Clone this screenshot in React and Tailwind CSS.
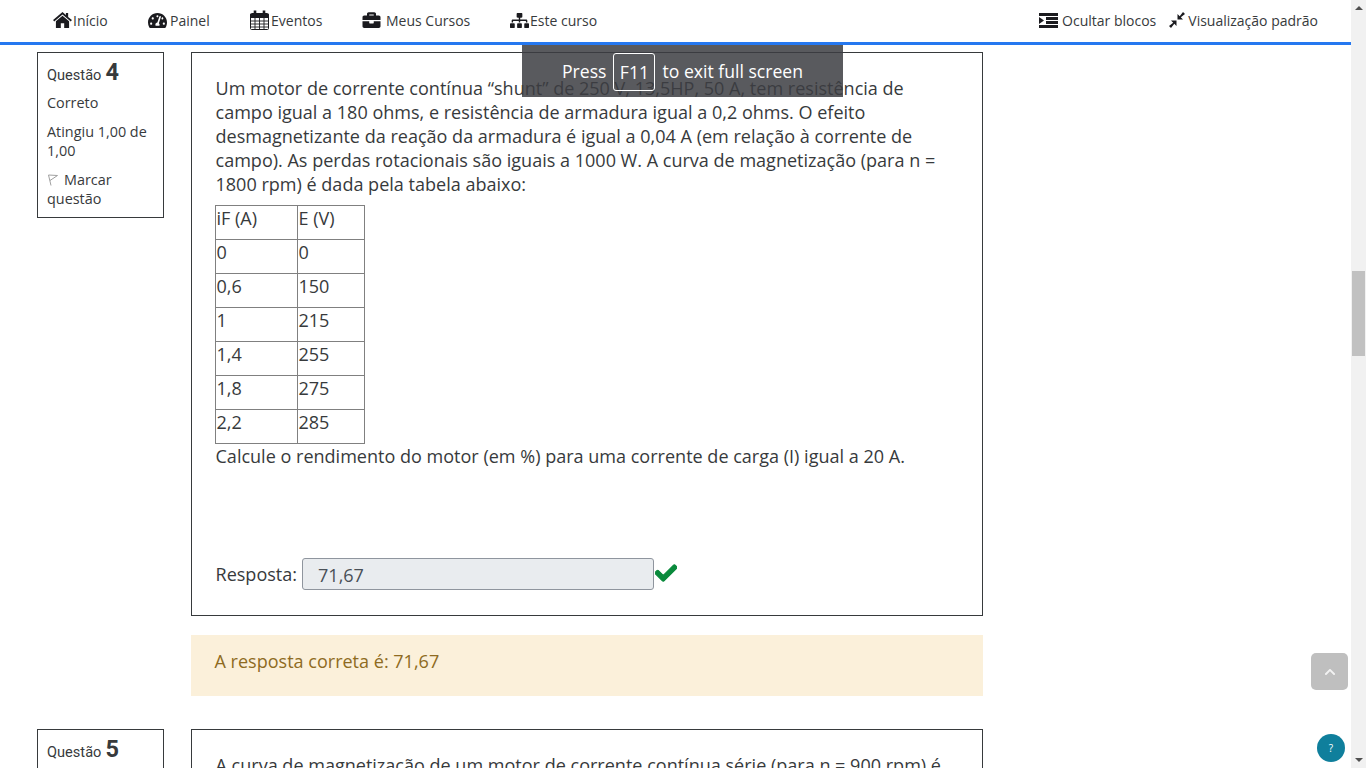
import { FaTachometerAlt, FaBriefcase, FaSitemap, FaCheck, FaChevronUp } from 'react-icons/fa';

const HomeIcon = () => (
    <svg viewBox="0 0 20 17" className="w-[19px] h-[16px]" fill="currentColor">
        <path d="M10 0 L13.6 3.1 V1 H16 V5.2 L20 8.6 L18.8 10 L10 2.6 L1.2 10 L0 8.6 Z" />
        <path d="M10 4 L17 9.8 V17 H11.8 V12 H8.2 V17 H3 V9.8 Z" />
    </svg>
);

const CalendarIcon = () => (
    <svg viewBox="0 0 19 20" className="w-[19px] h-[20px]" fill="none" stroke="currentColor">
        <rect x="0.5" y="3.5" width="18" height="16" rx="1" />
        <path d="M0.5 4.5 H18.5 V7.5 H0.5 Z" fill="currentColor" />
        <path d="M5 8 V19 M9.5 8 V19 M14 8 V19 M1 11 H18 M1 14 H18 M1 17 H18" strokeWidth="0.9" />
        <path d="M5 0.5 V5 M14 0.5 V5" strokeWidth="2.6" />
    </svg>
);

const IndentIcon = () => (
    <svg viewBox="0 0 19 15" className="w-[19px] h-[15px]" fill="currentColor">
        <rect x="0" y="0" width="19" height="3" />
        <rect x="7" y="4" width="12" height="3" />
        <rect x="7" y="8" width="12" height="3" />
        <rect x="0" y="12" width="19" height="3" />
        <path d="M0 4 L5 7.5 L0 11 Z" />
    </svg>
);

const CompressIcon = () => (
    <svg viewBox="0 0 16 16" className="w-[16px] h-[16px]" fill="currentColor">
        <path d="M7.5 8.5 V14 L5.3 11.8 L2 16 L0 14 L4.2 10.7 L2 8.5 Z" />
        <path d="M8.5 7.5 V2 L10.7 4.2 L14 0 L16 2 L11.8 5.3 L14 7.5 Z" />
    </svg>
);

const FlagIcon = () => (
    <svg viewBox="0 0 10 12" className="inline w-[10px] h-[12px] ml-[1px] mr-[6px] align-[-1px]" fill="none" stroke="#a0a0a0" strokeWidth="1">
        <path d="M0.5 1 L3 11.5" />
        <path d="M0.5 1 L9.5 1.5 L5 4.5 L2 6.5" />
    </svg>
);

const navLeft = [
    { icon: <HomeIcon />, label: 'Início', width: 'w-[95px]', gap: 'gap-[1px]' },
    { icon: <FaTachometerAlt className="w-[19px] h-[17px]" />, label: 'Painel', width: 'w-[102px]', gap: 'gap-[3px]' },
    { icon: <CalendarIcon />, label: 'Eventos', width: 'w-[111px]', gap: 'gap-[2px]' },
    { icon: <FaBriefcase className="w-[21px] h-[18px]" />, label: 'Meus Cursos', width: 'w-[149px]', gap: 'gap-[4px]' },
    { icon: <FaSitemap className="w-[19px] h-[17px]" />, label: 'Este curso', width: '', gap: 'gap-[1px]' },
];

const tableRows = [
    ['iF (A)', 'E (V)'],
    ['0', '0'],
    ['0,6', '150'],
    ['1', '215'],
    ['1,4', '255'],
    ['1,8', '275'],
    ['2,2', '285'],
];

function Header() {
    return (
        <header className="h-[45px] border-b-[3px] border-[#2578f0] bg-white flex items-center pl-[53px] pr-[33px] pb-[2px] text-[14px] text-[#373a3c]">
            {navLeft.map((item) => (
                <div key={item.label} className={`flex items-center ${item.gap} ${item.width}`}>
                    <span className="text-[#1b1b1f]">{item.icon}</span>
                    <span>{item.label}</span>
                </div>
            ))}
            <div className="ml-auto flex items-center">
                <span className="text-[#1b1b1f] mr-[4px]"><IndentIcon /></span>
                <span>Ocultar blocos</span>
                <span className="text-[#1b1b1f] ml-[13px] mr-[3px]"><CompressIcon /></span>
                <span>Visualização padrão</span>
            </div>
        </header>
    );
}

function QuestionInfo({ number, children, className }) {
    return (
        <div className={`w-[127px] shrink-0 border border-[#373a3c] px-[9px] pt-[8px] text-[14.4px] leading-[19px] text-[#373a3c] ${className}`}>
            <div className="flex items-baseline gap-[4px] font-['Roboto',sans-serif] h-[25px]">
                <span className="text-[14.6px] translate-y-[2px]">Questão</span>
                <span className="text-[23.5px] font-bold translate-y-[2px]">{number}</span>
            </div>
            {children}
        </div>
    );
}

export default function App() {
    return (
        <div className="relative h-[768px] overflow-hidden bg-white font-['Open_Sans',sans-serif]">
            <div className="w-[1351px]">
                <Header />
                <main className="pl-[37px] pt-[7px] flex flex-col">
                    <section className="flex gap-[27px]">
                        <QuestionInfo number="4" className="self-start h-[166px]">
                            <p className="mt-[7px]">Correto</p>
                            <p className="mt-[10px]">Atingiu 1,00 de 1,00</p>
                            <p className="mt-[10px]">
                                <FlagIcon />
                                Marcar questão
                            </p>
                        </QuestionInfo>
                        <div className="w-[792px]">
                            <div className="h-[564px] border border-[#373a3c] pl-[23.5px] pr-[24px] pt-[23px] text-[18.05px] leading-[24px] text-[#373a3c]">
                                <p>
                                    Um motor de corrente contínua “shunt” de 250 V, 13,5HP, 50 A, tem resistência de campo igual a 180 ohms, e resistência de armadura igual a 0,2 ohms. O efeito desmagnetizante da reação da armadura é igual a 0,04 A (em relação à corrente de campo). As perdas rotacionais são iguais a 1000 W. A curva de magnetização (para n = 1800 rpm) é dada pela tabela abaixo:
                                </p>
                                <table className="mt-[9px] border-collapse w-[150px] table-fixed -translate-x-[1px]">
                                    <tbody>
                                        {tableRows.map((row) => (
                                            <tr key={row[0]} className="h-[34px]">
                                                <td className="w-[82px] border border-[#808080] pl-[1px] pb-[9px] align-middle">{row[0]}</td>
                                                <td className="w-[67px] border border-[#808080] pl-[1px] pb-[9px] align-middle">{row[1]}</td>
                                            </tr>
                                        ))}
                                    </tbody>
                                </table>
                                <p>Calcule o rendimento do motor (em %) para uma corrente de carga (I) igual a 20 A.</p>
                                <div className="mt-[90px] flex items-center">
                                    <span>Resposta:</span>
                                    <div className="ml-[5px] w-[352px] h-[32px] rounded-[3px] border border-[#8f959e] bg-[#e9ecef] pl-[15px] leading-[32px] text-[#495057]">71,67</div>
                                    <FaCheck stroke="currentColor" strokeWidth="24" className="w-[22px] h-[22px] text-[#0a8a3c] ml-[1px] -mt-[2px]" />
                                </div>
                            </div>
                            <div className="mt-[19px] h-[61px] bg-[#fbf0da] pl-[23.5px] pt-[14px] text-[18.05px] leading-[24px] text-[#8e6b22]">
                                A resposta correta é: 71,67
                            </div>
                        </div>
                    </section>
                    <section className="flex gap-[27px] mt-[33px]">
                        <QuestionInfo number="5" className="h-[100px]" />
                        <div className="w-[792px] h-[200px] border border-[#373a3c] pl-[23.5px] pr-[24px] pt-[23px] text-[18.05px] leading-[24px] text-[#373a3c]">
                            <p>A curva de magnetização de um motor de corrente contínua série (para n = 900 rpm) é</p>
                        </div>
                    </section>
                </main>
            </div>

            {/* fullscreen toast */}
            <div className="absolute left-[522px] top-[45px] w-[321px] h-[52px] bg-[#3c3d42]/85 text-white text-[17.6px] flex items-center justify-center gap-[7px] pt-[1px]">
                <span>Press</span>
                <span className="h-[38px] w-[42px] mt-[1px] border border-white rounded-[3px] flex items-center justify-center">F11</span>
                <span>to exit full screen</span>
            </div>

            {/* back to top */}
            <div className="absolute left-[1311px] top-[653px] w-[37px] h-[37px] rounded-[5px] bg-[#bfbfbf] flex items-center justify-center">
                <FaChevronUp className="w-[12px] h-[12px] text-white opacity-80" />
            </div>

            {/* help */}
            <div className="absolute left-[1317px] top-[734px] w-[28px] h-[28px] rounded-full bg-[#0f7f9c] flex items-center justify-center text-white text-[10px]">?</div>

            {/* scrollbar */}
            <div className="absolute right-0 top-0 w-[15px] h-[768px] bg-[#f1f1f1]">
                <div className="absolute left-[4px] top-[6px] w-0 h-0 border-x-[4px] border-x-transparent border-b-[4px] border-b-[#505050]" />
                <div className="absolute left-[1px] top-[271px] w-[13px] h-[85px] bg-[#c1c1c1]" />
                <div className="absolute left-[4px] top-[758px] w-0 h-0 border-x-[4px] border-x-transparent border-t-[4px] border-t-[#505050]" />
            </div>
        </div>
    );
}
